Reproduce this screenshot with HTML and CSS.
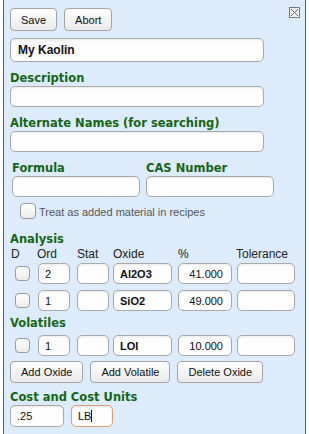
FILE: index.html
```html
<!DOCTYPE html>
<html lang="en">
<head>
    <meta charset="UTF-8">
    <meta name="viewport" content="width=device-width, initial-scale=1.0">
    <title>Edit Material</title>
    <link rel="stylesheet" href="styles.css">
</head>
<body>
    <div class="panel">
        <button class="close" title="Close">
            <svg width="11" height="11" viewBox="0 0 11 11">
                <rect x="0.5" y="0.5" width="10" height="10" fill="#f4f4f4" stroke="#777"/>
                <path d="M2 2 L9 9 M9 2 L2 9" stroke="#666" stroke-width="1"/>
            </svg>
        </button>
        <div class="toolbar">
            <button class="btn">Save</button>
            <button class="btn">Abort</button>
        </div>
        <input class="field field-name" type="text" value="My Kaolin">

        <label class="caption">Description</label>
        <input class="field field-wide" type="text">

        <label class="caption">Alternate Names (for searching)</label>
        <input class="field field-wide" type="text">

        <div class="pair">
            <div class="pair-item">
                <label class="caption">Formula</label>
                <input class="field field-half" type="text">
            </div>
            <div class="pair-item">
                <label class="caption">CAS Number</label>
                <input class="field field-half" type="text">
            </div>
        </div>

        <label class="check-row">
            <input type="checkbox" class="check">
            <span>Treat as added material in recipes</span>
        </label>

        <div class="caption section">Analysis</div>
        <div class="oxide-head">
            <span class="head-d">D</span>
            <span class="head-ord">Ord</span>
            <span>Stat</span>
            <span>Oxide</span>
            <span>%</span>
            <span class="head-tol">Tolerance</span>
        </div>
        <div class="oxides">
            <input type="checkbox" class="check check-row-box">
            <input class="field f-ord" type="text" value="2">
            <input class="field f-stat" type="text">
            <input class="field f-oxide" type="text" value="Al2O3">
            <input class="field f-pct" type="text" value="41.000">
            <input class="field f-tol" type="text">

            <input type="checkbox" class="check check-row-box">
            <input class="field f-ord" type="text" value="1">
            <input class="field f-stat" type="text">
            <input class="field f-oxide" type="text" value="SiO2">
            <input class="field f-pct" type="text" value="49.000">
            <input class="field f-tol" type="text">
        </div>

        <div class="caption volatiles">Volatiles</div>
        <div class="oxides">
            <input type="checkbox" class="check check-row-box">
            <input class="field f-ord" type="text" value="1">
            <input class="field f-stat" type="text">
            <input class="field f-oxide" type="text" value="LOI">
            <input class="field f-pct" type="text" value="10.000">
            <input class="field f-tol" type="text">
        </div>

        <div class="actions">
            <button class="btn">Add Oxide</button>
            <button class="btn">Add Volatile</button>
            <button class="btn">Delete Oxide</button>
        </div>

        <div class="caption cost">Cost and Cost Units</div>
        <div class="cost-row">
            <input class="field f-cost" type="text" value=".25">
            <div class="focus-wrap">
                <input class="field f-unit is-focused" type="text" value="LB">
                <span class="caret"></span>
            </div>
        </div>
    </div>
</body>
</html>
```

FILE: styles.css
```css
html, body {
    margin: 0;
    height: 100%;
    overflow: hidden;
}
body {
    background: #ffffff;
    font-family: "Liberation Sans", Arial, sans-serif;
    font-size: 11px;
    color: #222;
}
.panel {
    position: relative;
    box-sizing: border-box;
    margin-left: 3px;
    width: 303px;
    min-height: 100%;
    padding: 8px 6px 0 6px;
    background: #ddecfd;
    border-left: 1px solid #4b5d98;
    border-right: 1px solid #4b5d98;
}
.close {
    position: absolute;
    top: 7px;
    right: 5px;
    padding: 0;
    border: none;
    background: none;
    line-height: 0;
}
.toolbar {
    display: flex;
    gap: 7px;
}
.btn {
    box-sizing: border-box;
    height: 23px;
    padding: 0 10px;
    font-family: "Liberation Sans", Arial, sans-serif;
    font-size: 11px;
    color: #111;
    background: linear-gradient(#ffffff, #e9e9e9);
    border: 1px solid #a3a3a3;
    border-radius: 4px;
}
.field {
    display: block;
    box-sizing: border-box;
    height: 21px;
    margin: 0;
    padding: 0 6px;
    font-family: "Liberation Sans", Arial, sans-serif;
    font-size: 11px;
    color: #111;
    background: #fdfdfd;
    border: 1px solid #a8a8a8;
    border-radius: 5px;
    box-shadow: inset 0 1px 2px rgba(0, 0, 0, 0.08);
    outline: none;
}
.field-name {
    width: 254px;
    height: 24px;
    margin-top: 7px;
    padding-left: 7px;
    font-size: 12px;
    font-weight: bold;
}
.field-wide {
    width: 254px;
}
.caption {
    display: block;
    margin: 9px 0 1px;
    font-family: "DejaVu Sans", Verdana, sans-serif;
    font-size: 11.5px;
    font-weight: bold;
    line-height: 14px;
    color: #146514;
}
.pair {
    display: flex;
    gap: 6px;
    padding-left: 2px;
}
.field-half {
    width: 128px;
}
.check-row {
    display: flex;
    align-items: flex-end;
    gap: 3px;
    margin: 6px 0 0 10px;
    line-height: 13px;
    color: #555;
}
.check {
    appearance: none;
    -webkit-appearance: none;
    box-sizing: border-box;
    width: 16px;
    height: 16px;
    margin: 0;
    background: linear-gradient(#ffffff, #ececec);
    border: 1px solid #9a9a9a;
    border-radius: 4px;
}
.section {
    margin-top: 13px;
}
.oxide-head,
.oxides {
    display: grid;
    grid-template-columns: 28px 39px 36px 65px 59px 60px;
    align-items: center;
}
.oxide-head {
    margin: 1px 0 2px;
    font-size: 12px;
    line-height: 14px;
    color: #222;
}
.head-d {
    padding-left: 1px;
}
.head-ord {
    margin-left: -1px;
}
.head-tol {
    margin-left: -1px;
}
.oxides {
    row-gap: 6px;
}
.check-row-box {
    width: 15px;
    height: 15px;
    margin-left: 5px;
}
.f-ord { width: 32px; }
.f-stat { width: 32px; }
.f-oxide {
    width: 59px;
    font-weight: bold;
}
.f-pct {
    width: 54px;
    text-align: right;
    padding-right: 8px;
}
.f-tol { width: 58px; }
.volatiles {
    margin: 5px 0 5px;
}
.actions {
    display: flex;
    gap: 7px;
    margin-top: 5px;
}
.actions .btn {
    height: 22px;
}
.cost {
    margin: 7px 0 1px;
}
.cost-row {
    display: flex;
    gap: 7px;
}
.f-cost {
    width: 54px;
    height: 22px;
}
.focus-wrap {
    position: relative;
}
.f-unit {
    width: 42px;
    height: 22px;
}
.is-focused {
    border-color: #e59a74;
}
.caret {
    position: absolute;
    left: 20px;
    top: 5px;
    width: 1px;
    height: 12px;
    background: #111;
}
```
